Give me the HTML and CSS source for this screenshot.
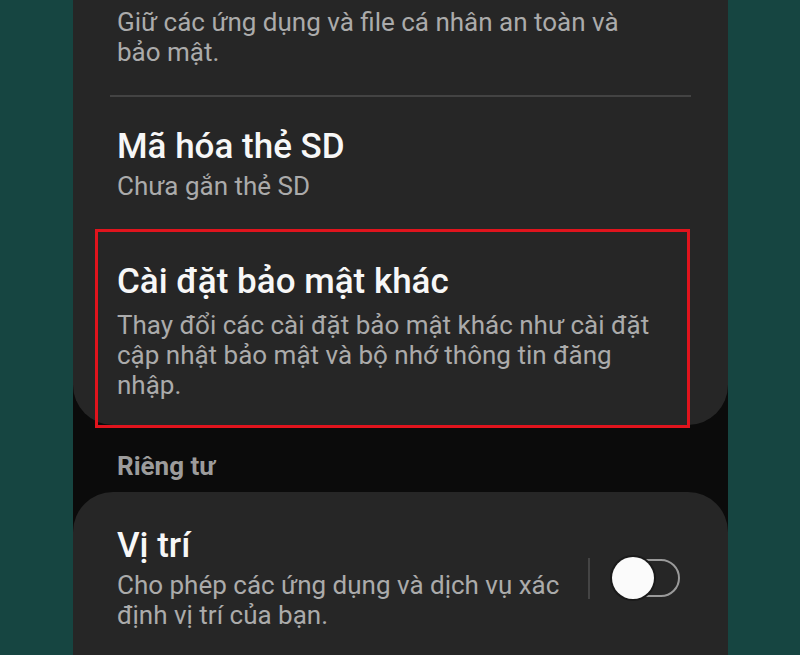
FILE: index.html
```html
<!DOCTYPE html>
<html lang="vi">
<head>
<meta charset="utf-8">
<title>Bảo mật</title>
<link rel="stylesheet" href="styles.css">
</head>
<body>
<div class="phone">
  <section class="card card-top">
    <div class="item item-first">
      <div class="title">Thư mục bảo mật</div>
      <div class="desc">Giữ các ứng dụng và file cá nhân an toàn và bảo mật.</div>
    </div>
    <div class="divider"></div>
    <div class="item">
      <div class="title">Mã hóa thẻ SD</div>
      <div class="desc">Chưa gắn thẻ SD</div>
    </div>
    <div class="item item-marked">
      <div class="title">Cài đặt bảo mật khác</div>
      <div class="desc">Thay đổi các cài đặt bảo mật khác như cài đặt cập nhật bảo mật và bộ nhớ thông tin đăng nhập.</div>
    </div>
  </section>

  <div class="section-label">Riêng tư</div>

  <section class="card card-bottom">
    <div class="item item-row">
      <div class="item-text">
        <div class="title">Vị trí</div>
        <div class="desc">Cho phép các ứng dụng và dịch vụ xác định vị trí của bạn.</div>
      </div>
      <div class="vsep"></div>
      <div class="toggle">
        <span class="track"></span>
        <span class="knob"></span>
      </div>
    </div>
  </section>
</div>
</body>
</html>
```

FILE: styles.css
```css
html, body {
  margin: 0;
  padding: 0;
}

body {
  background: #164541;
  height: 655px;
  overflow: hidden;
  font-family: Roboto, "Noto Sans", "DejaVu Sans", sans-serif;
}

.phone {
  width: 655px;
  height: 655px;
  margin-left: 73px;
  background: #0b0b0b;
  overflow: hidden;
}

.card {
  background: #262626;
}

.card-top {
  margin-top: -67px;
  border-radius: 0 0 40px 40px;
}

.card-bottom {
  border-radius: 40px 40px 0 0;
  padding-top: 4px;
  min-height: 300px;
}

.item {
  padding: 30px 60px 30px 44px;
}

.item-first {
  padding-bottom: 28px;
}

.title {
  color: #f7f7f7;
  font-size: 35px;
  font-weight: 500;
  line-height: 40px;
  margin-bottom: 4px;
}

.desc {
  color: #ababab;
  font-size: 26px;
  line-height: 30px;
}

.divider {
  height: 2px;
  background: #434343;
  margin: 0 37px;
}

.item-marked {
  position: relative;
  padding-top: 31px;
  padding-bottom: 25px;
}

.item-marked .title {
  margin-bottom: 8px;
}

.item-marked::after {
  content: "";
  position: absolute;
  left: 22px;
  right: 38px;
  top: -2px;
  bottom: -3px;
  border: 3px solid #e0141d;
}

.section-label {
  color: #9c9c9c;
  font-size: 26px;
  font-weight: 700;
  line-height: 30px;
  padding-left: 44px;
  margin: 26px 0 11px;
}

.item-row {
  display: flex;
  align-items: center;
  padding-right: 48px;
}

.item-text {
  flex: 1;
  min-width: 0;
}

.vsep {
  width: 2px;
  height: 41px;
  background: #444;
  margin: 0 22px 0 10px;
}

.toggle {
  position: relative;
  width: 68px;
  height: 42px;
  flex: none;
}

.track {
  position: absolute;
  left: 4px;
  right: 0;
  top: 2px;
  bottom: 2px;
  border: 2px solid #9a9a9a;
  border-radius: 19px;
  box-sizing: border-box;
}

.knob {
  position: absolute;
  left: 0;
  top: 0;
  width: 42px;
  height: 42px;
  border-radius: 50%;
  background: #fbfbfb;
  box-shadow: 0 0 0 2px #1a1a1a;
}
```
